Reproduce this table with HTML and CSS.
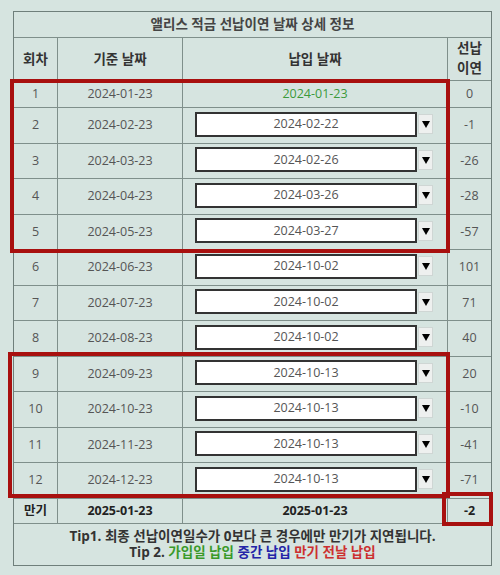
FILE: index.html
```html
<!DOCTYPE html>
<html lang="ko">
<head>
<meta charset="utf-8">
<link rel="stylesheet" href="styles.css">
</head>
<body>
<div class="page">
  <div class="grid">
    <div class="cell title">앨리스 적금 선납이연 날짜 상세 정보</div>
    <div class="cell head">회차</div>
    <div class="cell head">기준 날짜</div>
    <div class="cell head">납입 날짜</div>
    <div class="cell head two">선납<br>이연</div>

    <div class="cell">1</div><div class="cell">2024-01-23</div><div class="cell green">2024-01-23</div><div class="cell">0</div>

    <div class="cell">2</div><div class="cell">2024-02-23</div>
    <div class="cell pick"><span class="sel">2024-02-22</span><span class="arr"><svg viewBox="0 0 10 10"><path d="M1 2h8L5 9z"/></svg></span></div><div class="cell">-1</div>

    <div class="cell">3</div><div class="cell">2024-03-23</div>
    <div class="cell pick"><span class="sel">2024-02-26</span><span class="arr"><svg viewBox="0 0 10 10"><path d="M1 2h8L5 9z"/></svg></span></div><div class="cell">-26</div>

    <div class="cell">4</div><div class="cell">2024-04-23</div>
    <div class="cell pick"><span class="sel">2024-03-26</span><span class="arr"><svg viewBox="0 0 10 10"><path d="M1 2h8L5 9z"/></svg></span></div><div class="cell">-28</div>

    <div class="cell">5</div><div class="cell">2024-05-23</div>
    <div class="cell pick"><span class="sel">2024-03-27</span><span class="arr"><svg viewBox="0 0 10 10"><path d="M1 2h8L5 9z"/></svg></span></div><div class="cell">-57</div>

    <div class="cell">6</div><div class="cell">2024-06-23</div>
    <div class="cell pick"><span class="sel">2024-10-02</span><span class="arr"><svg viewBox="0 0 10 10"><path d="M1 2h8L5 9z"/></svg></span></div><div class="cell">101</div>

    <div class="cell">7</div><div class="cell">2024-07-23</div>
    <div class="cell pick"><span class="sel">2024-10-02</span><span class="arr"><svg viewBox="0 0 10 10"><path d="M1 2h8L5 9z"/></svg></span></div><div class="cell">71</div>

    <div class="cell">8</div><div class="cell">2024-08-23</div>
    <div class="cell pick"><span class="sel">2024-10-02</span><span class="arr"><svg viewBox="0 0 10 10"><path d="M1 2h8L5 9z"/></svg></span></div><div class="cell">40</div>

    <div class="cell">9</div><div class="cell">2024-09-23</div>
    <div class="cell pick"><span class="sel">2024-10-13</span><span class="arr"><svg viewBox="0 0 10 10"><path d="M1 2h8L5 9z"/></svg></span></div><div class="cell">20</div>

    <div class="cell">10</div><div class="cell">2024-10-23</div>
    <div class="cell pick"><span class="sel">2024-10-13</span><span class="arr"><svg viewBox="0 0 10 10"><path d="M1 2h8L5 9z"/></svg></span></div><div class="cell">-10</div>

    <div class="cell">11</div><div class="cell">2024-11-23</div>
    <div class="cell pick"><span class="sel">2024-10-13</span><span class="arr"><svg viewBox="0 0 10 10"><path d="M1 2h8L5 9z"/></svg></span></div><div class="cell">-41</div>

    <div class="cell">12</div><div class="cell">2024-12-23</div>
    <div class="cell pick"><span class="sel">2024-10-13</span><span class="arr"><svg viewBox="0 0 10 10"><path d="M1 2h8L5 9z"/></svg></span></div><div class="cell">-71</div>

    <div class="cell bold">만기</div><div class="cell bold">2025-01-23</div><div class="cell bold">2025-01-23</div><div class="cell bold">-2</div>

    <div class="cell tip">
      <div>Tip1. 최종 선납이연일수가 0보다 큰 경우에만 만기가 지연됩니다.</div>
      <div>Tip 2. <span class="t-green">가입일 납입</span> <span class="t-blue">중간 납입</span> <span class="t-red">만기 전날 납입</span></div>
    </div>
  </div>
  <div class="mark m1"></div>
  <div class="mark m2"></div>
  <div class="mark m3"></div>
</div>
</body>
</html>
```

FILE: styles.css
```css
html, body {
  margin: 0;
  padding: 0;
}
body {
  background: #d6e4e0;
  font-family: "Open Sans", "Noto Sans CJK KR", sans-serif;
  font-size: 12.5px;
  color: #555;
  width: 500px;
  height: 575px;
  overflow: hidden;
}
.page {
  position: relative;
  padding: 11px 0 0 13px;
  height: 564px;
  box-sizing: border-box;
  border-left: 7px solid #dfe3e2;
  margin-left: -7px;
}
.grid {
  display: grid;
  grid-template-columns: 43px 124px 264px 43px;
  grid-template-rows: 25px 42px 26px repeat(11, 34.5px) 24px 41px;
  gap: 1px;
  border: 1px solid #6f7f7b;
  background: #7f8f8b;
  box-sizing: border-box;
  width: 479px;
}
.cell {
  background: #d6e4e0;
  display: flex;
  align-items: center;
  justify-content: center;
  text-align: center;
  line-height: 1.25;
}
.title {
  grid-column: 1 / 5;
  font-weight: bold;
  color: #444;
  font-size: 13.5px;
}
.head {
  font-weight: bold;
  color: #333;
  font-size: 13.5px;
}
.head.two {
  line-height: 1.45;
}
.green { color: #3c9a3c; }
.bold { font-weight: bold; color: #222; }
.pick {
  justify-content: flex-start;
  padding-left: 12px;
  gap: 1px;
}
.sel {
  box-sizing: border-box;
  width: 222px;
  height: 25px;
  border: 2px solid #333;
  background: #fff;
  display: flex;
  align-items: center;
  justify-content: center;
  color: #555;
  margin-top: -2px;
}
.arr {
  box-sizing: border-box;
  width: 15px;
  height: 20px;
  background: #eef0ef;
  border: 1px solid #cfd6d4;
  display: flex;
  align-items: center;
  justify-content: center;
  margin-top: -2px;
}
.arr svg {
  width: 10px;
  height: 10px;
  fill: #000;
}
.tip {
  grid-column: 1 / 5;
  flex-direction: column;
  font-weight: bold;
  color: #333;
  line-height: 1.2;
  font-size: 13.5px;
}
.t-green { color: #3a9a2a; }
.t-blue { color: #2424a8; }
.t-red { color: #cc3030; }
.mark {
  position: absolute;
  border: 4px solid #a8100f;
  box-sizing: border-box;
}
.m1 { left: 10px; top: 79px; width: 440px; height: 174px; }
.m2 { left: 8px; top: 352px; width: 442px; height: 146px; }
.m3 { left: 442px; top: 492px; width: 51px; height: 34px; }
```
